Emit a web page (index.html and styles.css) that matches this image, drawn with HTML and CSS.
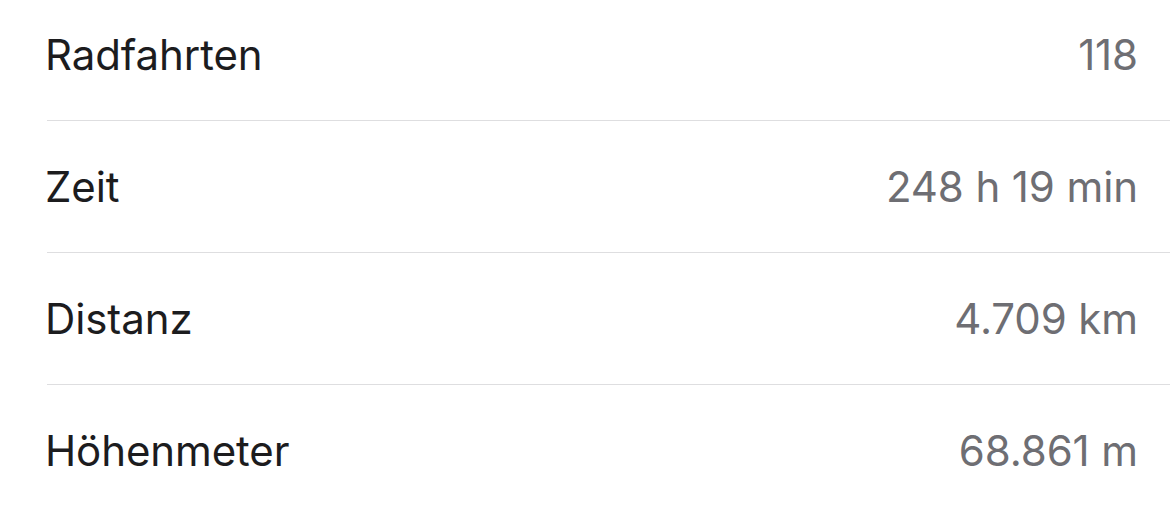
FILE: index.html
```html
<!DOCTYPE html>
<html lang="de">
<head>
<meta charset="utf-8">
<link rel="stylesheet" href="styles.css">
</head>
<body>
<ul class="list">
  <li class="row"><span class="label">Radfahrten</span><span class="value">118</span></li>
  <li class="row"><span class="label">Zeit</span><span class="value">248 h 19 min</span></li>
  <li class="row"><span class="label">Distanz</span><span class="value">4.709 km</span></li>
  <li class="row"><span class="label">Höhenmeter</span><span class="value">68.861 m</span></li>
</ul>
</body>
</html>
```
FILE: styles.css
```css
html, body {
  margin: 0;
  padding: 0;
  background: #ffffff;
  overflow: hidden;
}
body {
  font-family: Inter, "Noto Sans", sans-serif;
  -webkit-font-smoothing: antialiased;
}
.list {
  list-style: none;
  margin: -11px 0 0 47px;
  padding: 0;
}
.row {
  display: flex;
  align-items: center;
  justify-content: space-between;
  height: 131px;
  padding-right: 32px;
  border-bottom: 1px solid #dedee0;
}
.row:last-child {
  border-bottom: none;
}
.label {
  margin-left: -2px;
  font-size: 42px;
  color: #1c1c1e;
  letter-spacing: -0.1px;
}
.value {
  font-size: 42px;
  color: #6e6e73;
  letter-spacing: -0.1px;
}
```
